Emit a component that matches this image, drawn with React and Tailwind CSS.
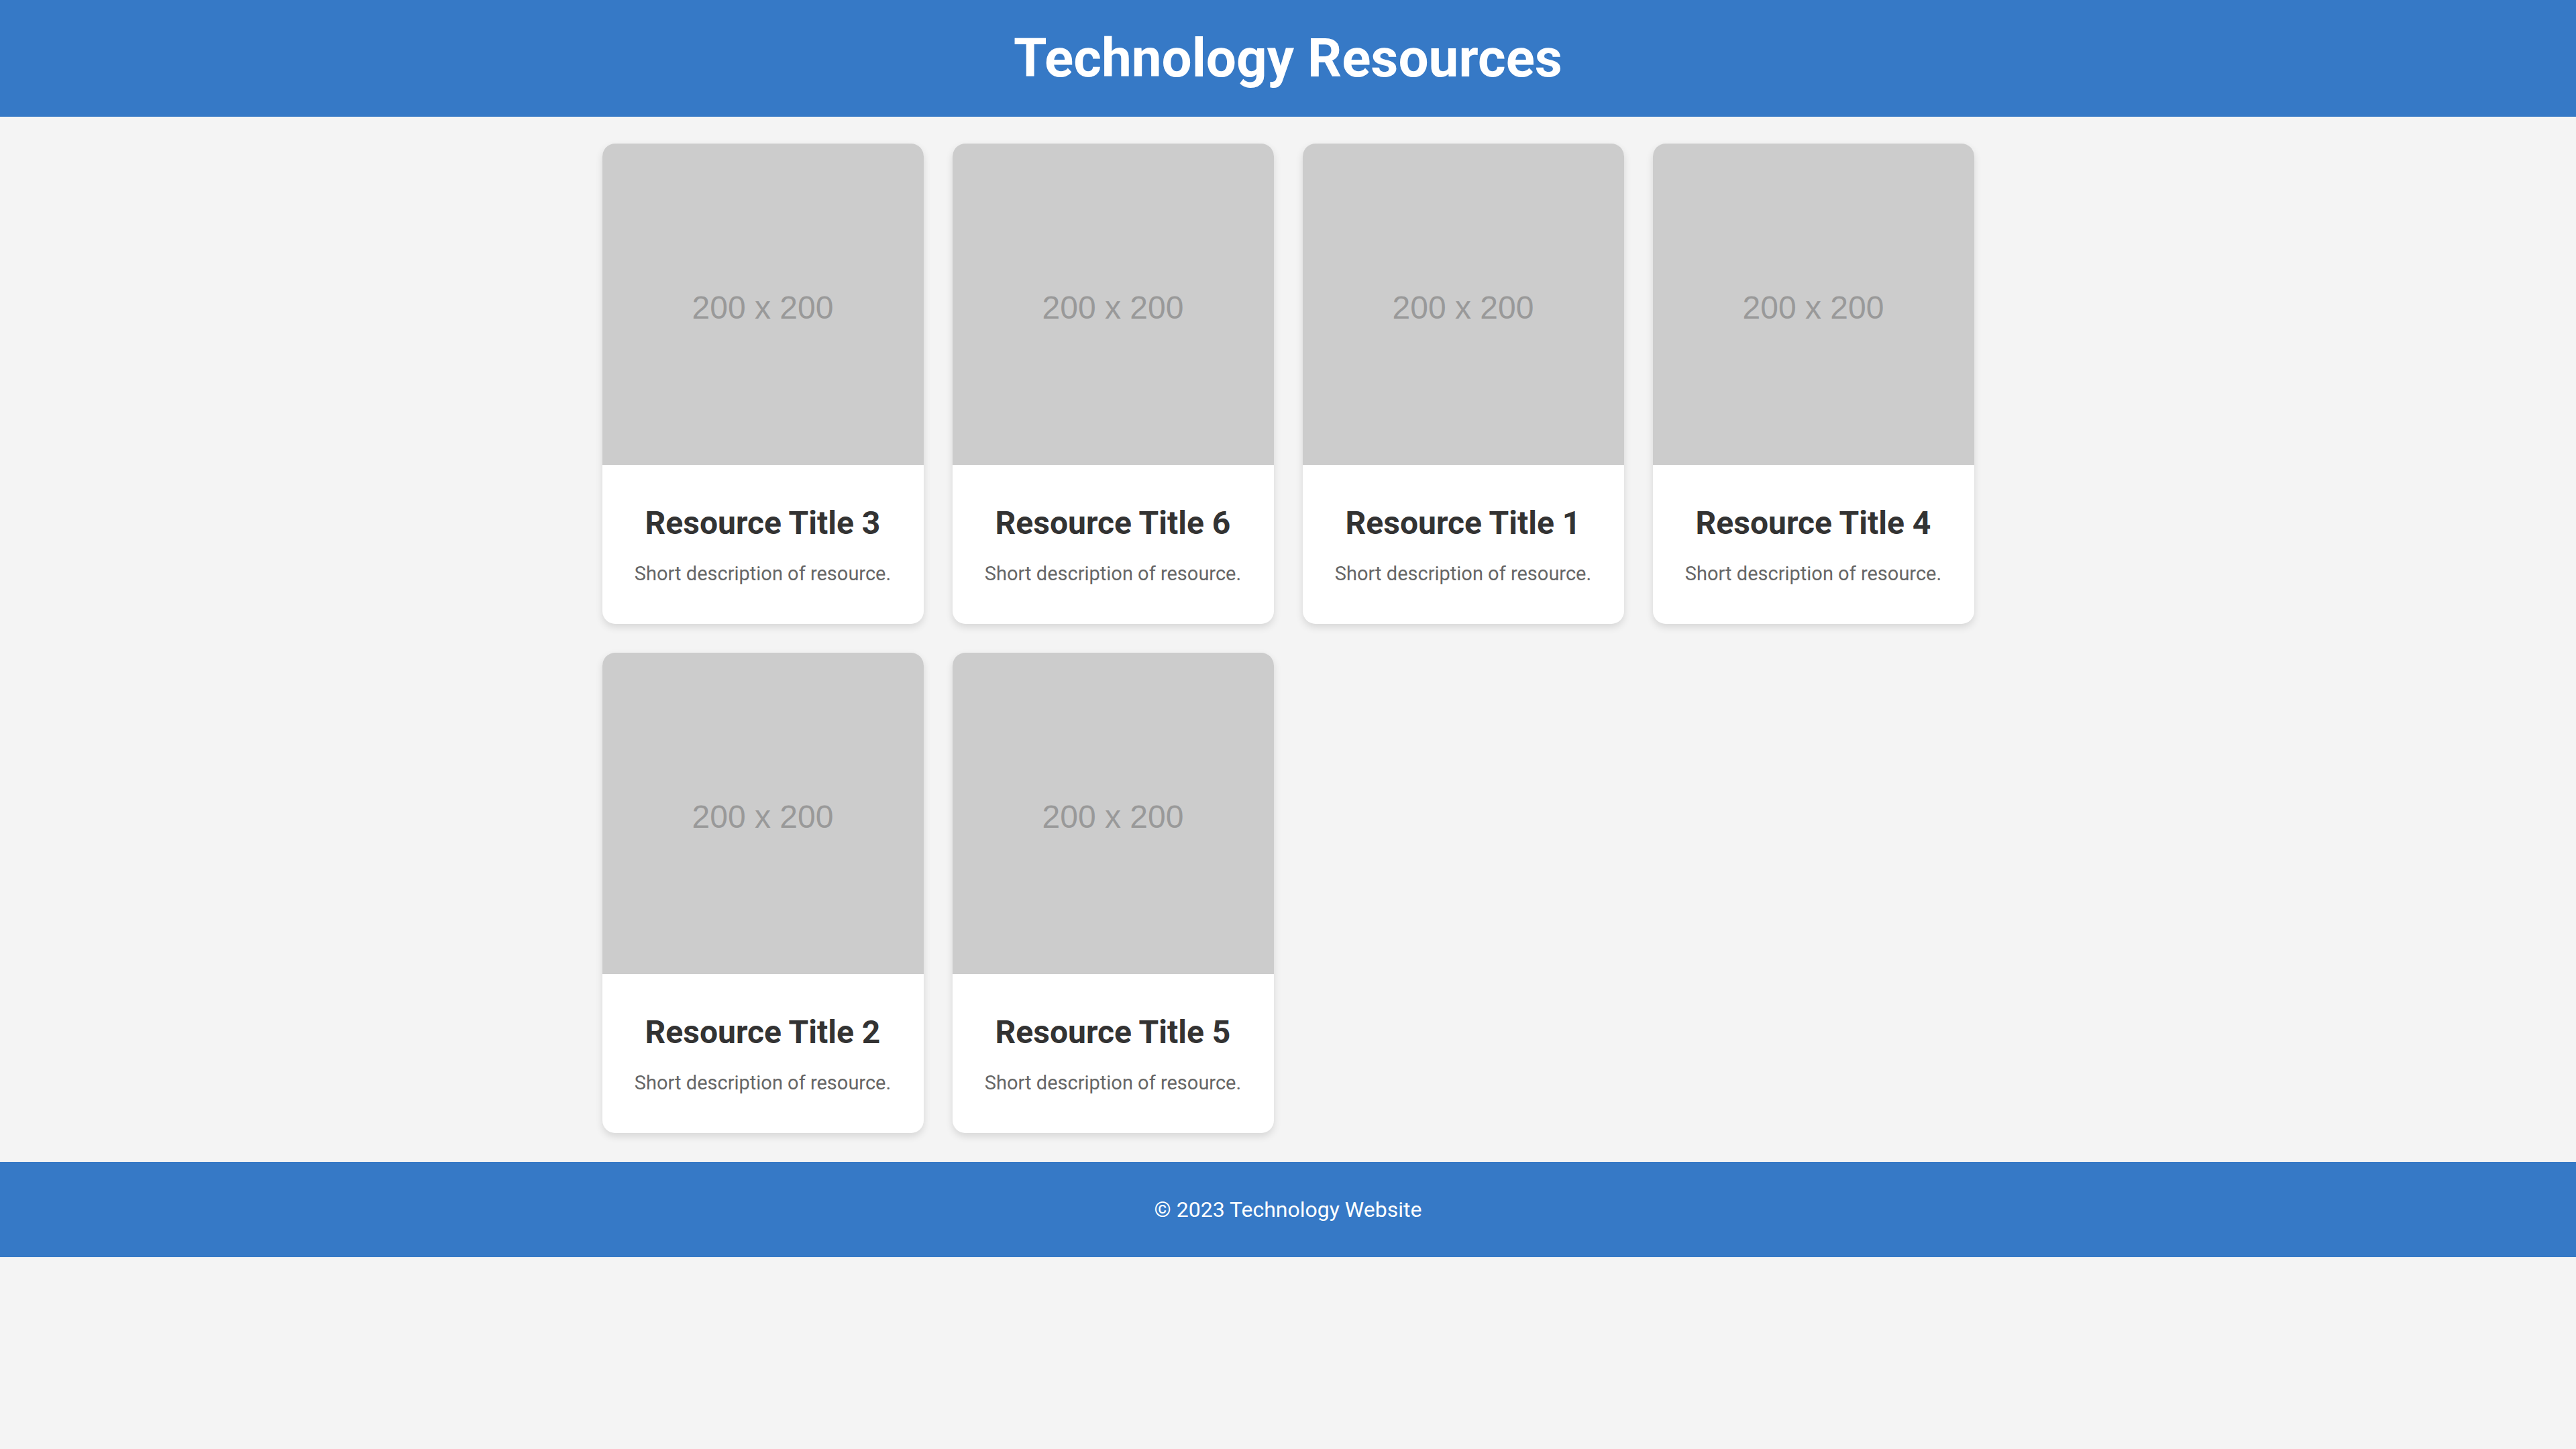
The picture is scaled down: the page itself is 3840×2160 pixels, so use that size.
import React from 'react';

const resources = [
  { id: 3, title: 'Resource Title 3' },
  { id: 6, title: 'Resource Title 6' },
  { id: 1, title: 'Resource Title 1' },
  { id: 4, title: 'Resource Title 4' },
  { id: 2, title: 'Resource Title 2' },
  { id: 5, title: 'Resource Title 5' },
];

const ResourceCard = ({ title }) => (
  <div className="w-[479px] bg-white rounded-[19px] overflow-hidden shadow-[0_5px_12px_rgba(0,0,0,0.12)]">
    <div className="h-[479px] bg-[#cccccc] flex items-center justify-center">
      <span className="text-[48px] text-[#999999] font-['Liberation_Sans',sans-serif] mt-[10px]">200 x 200</span>
    </div>
    <div className="pt-[59px] pb-[58px] px-[24px] text-center">
      <h3 className="text-[48px] leading-[56px] font-bold text-[#333333]">{title}</h3>
      <p className="mt-[30px] text-[29px] leading-[34px] text-[#666666]">Short description of resource.</p>
    </div>
  </div>
);

const App = () => {
  return (
    <div className="min-h-screen bg-[#f4f4f4] font-['Roboto',sans-serif]">
      <header className="h-[174px] bg-[#3679c6] flex items-center justify-center">
        <h1 className="text-[80px] leading-none font-bold text-white">Technology Resources</h1>
      </header>

      <main className="pt-[40px] pb-[43px] flex justify-center">
        <div className="grid grid-cols-[repeat(4,479px)] gap-[43px]">
          {resources.map((resource) => (
            <ResourceCard key={resource.id} title={resource.title} />
          ))}
        </div>
      </main>

      <footer className="h-[142px] bg-[#3679c6] flex items-center justify-center">
        <p className="text-[32px] text-white">© 2023 Technology Website</p>
      </footer>
    </div>
  );
};

export default App;
